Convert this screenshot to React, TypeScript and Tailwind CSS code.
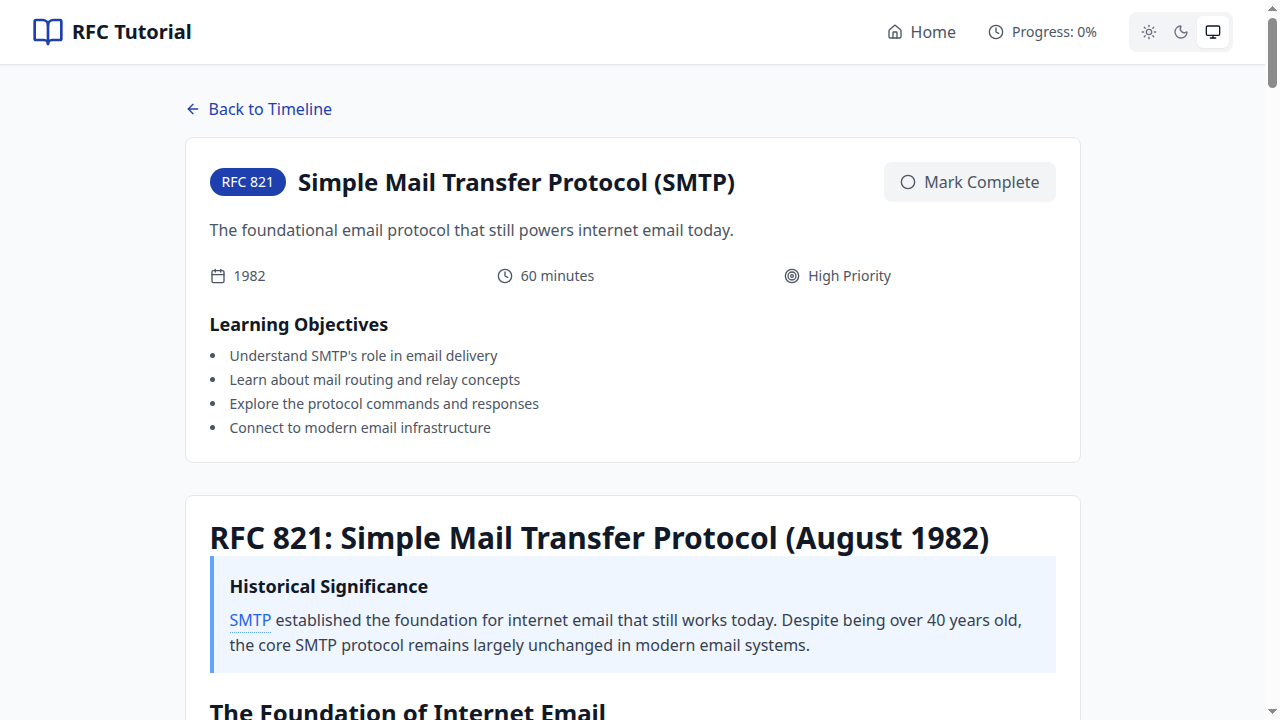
import { useState } from 'react';
import { ArrowLeft, BookOpen, Calendar, CircleCheck, Circle, Clock, House, Monitor, Moon, Sun, Target } from 'lucide-react';

const themes = [
  { name: 'light', label: 'Light theme', Icon: Sun },
  { name: 'dark', label: 'Dark theme', Icon: Moon },
  { name: 'system', label: 'System theme', Icon: Monitor },
];

const details = [
  { text: '1982', Icon: Calendar },
  { text: '60 minutes', Icon: Clock },
  { text: 'High Priority', Icon: Target },
];

const objectives = [
  "Understand SMTP's role in email delivery",
  'Learn about mail routing and relay concepts',
  'Explore the protocol commands and responses',
  'Connect to modern email infrastructure',
];

function ThemeSwitch() {
  const [theme, setTheme] = useState('system');
  return (
    <div className="flex rounded-lg bg-[#f3f4f6] p-1">
      {themes.map(({ name, label, Icon }) => (
        <button
          key={name}
          type="button"
          aria-label={label}
          aria-pressed={theme === name}
          onClick={() => setTheme(name)}
          className={
            theme === name
              ? 'rounded-md bg-white p-2 text-[#111827] shadow-xs'
              : 'rounded-md p-2 text-[#6b7280]'
          }
        >
          <Icon className="size-4" />
        </button>
      ))}
    </div>
  );
}

function Header() {
  return (
    <header className="border-b border-[#e5e7eb] bg-white shadow-xs">
      <div className="mx-auto flex h-16 max-w-7xl items-center justify-between px-8">
        <a href="#home" className="flex items-center gap-2">
          <BookOpen className="size-8 text-[#1e40af]" />
          <span className="text-xl font-bold text-[#111827]">RFC Tutorial</span>
        </a>
        <nav className="flex items-center gap-8 text-[#4b5563]">
          <a href="#home" className="flex items-center gap-2">
            <House className="size-4" />
            <span>Home</span>
          </a>
          <div className="flex items-center gap-2 text-sm">
            <Clock className="size-4" />
            <span>Progress: 0%</span>
          </div>
          <ThemeSwitch />
        </nav>
      </div>
    </header>
  );
}

function Summary() {
  const [done, setDone] = useState(false);
  return (
    <section className="rounded-lg border border-[#e5e7eb] bg-white p-6">
      <div className="mb-4 flex items-center justify-between">
        <div className="flex items-center gap-3">
          <span className="rounded-full bg-[#1e40af] px-3 py-1 text-sm text-white">RFC 821</span>
          <h1 className="text-2xl font-bold text-[#111827]">Simple Mail Transfer Protocol (SMTP)</h1>
        </div>
        <button
          type="button"
          onClick={() => setDone(!done)}
          className="flex items-center gap-2 rounded-lg bg-[#f3f4f6] px-4 py-2 text-[#4b5563]"
        >
          {done ? <CircleCheck className="size-4" /> : <Circle className="size-4" />}
          <span>{done ? 'Completed' : 'Mark Complete'}</span>
        </button>
      </div>
      <p className="mb-6 text-[#4b5563]">The foundational email protocol that still powers internet email today.</p>
      <div className="mb-6 grid grid-cols-3 gap-4 text-sm text-[#4b5563]">
        {details.map(({ text, Icon }) => (
          <div key={text} className="flex items-center gap-2">
            <Icon className="size-4" />
            <span>{text}</span>
          </div>
        ))}
      </div>
      <h2 className="mb-2 text-lg font-bold text-[#111827]">Learning Objectives</h2>
      <ul className="list-inside list-disc space-y-1 text-sm text-[#4b5563]">
        {objectives.map((item) => (
          <li key={item}>{item}</li>
        ))}
      </ul>
    </section>
  );
}

function Article() {
  return (
    <article className="rounded-lg border border-[#e5e7eb] bg-white p-6">
      <h1 className="text-3xl font-bold text-[#111827]">RFC 821: Simple Mail Transfer Protocol (August 1982)</h1>
      <div className="mb-6 border-l-4 border-[#60a5fa] bg-[#eff6ff] px-4 pt-4 pb-[15px]">
        <h3 className="mb-2 text-lg font-bold text-[#111827]">Historical Significance</h3>
        <p className="leading-[25px] text-[#374151]">
          <a href="#smtp" className="border-b border-dotted border-[#60a5fa] pb-px text-[#2563eb]">SMTP</a> established the
          foundation for internet email that still works today. Despite being over 40 years old, the core SMTP protocol
          remains largely unchanged in modern email systems.
        </p>
      </div>
      <h2 className="text-2xl font-bold text-[#111827]">The Foundation of Internet Email</h2>
    </article>
  );
}

function ScrollTrack() {
  return (
    <div aria-hidden="true" className="flex w-[15px] shrink-0 flex-col items-center bg-[#fcfcfc] py-1.5 text-[#8b8b8b]">
      <svg width="9" height="5" viewBox="0 0 9 5" fill="currentColor" shapeRendering="crispEdges">
        <path d="M4 0h1v1h1v1h1v1h1v1h1v1H0V4h1V3h1V2h1V1h1z" />
      </svg>
      <div className="mt-[7px] h-[70px] w-[9px] rounded-full bg-[#8b8b8b]" />
      <svg className="mt-auto" width="9" height="5" viewBox="0 0 9 5" fill="currentColor" shapeRendering="crispEdges">
        <path d="M0 0h9v1H8v1H7v1H6v1H5v1H4V4H3V3H2V2H1V1H0z" />
      </svg>
    </div>
  );
}

export default function App() {
  return (
    <div className="flex h-screen overflow-hidden bg-[#f8fafc] font-['Noto_Sans',system-ui,sans-serif]">
      <div className="min-w-0 flex-1 overflow-y-auto [scrollbar-width:none]">
        <Header />
        <main className="mx-auto max-w-4xl py-8">
          <a href="#timeline" className="mb-4 inline-flex items-center gap-2 text-[#1e40af]">
            <ArrowLeft className="size-4" />
            <span>Back to Timeline</span>
          </a>
          <div className="flex flex-col gap-8">
            <Summary />
            <Article />
          </div>
        </main>
      </div>
      <ScrollTrack />
    </div>
  );
}
